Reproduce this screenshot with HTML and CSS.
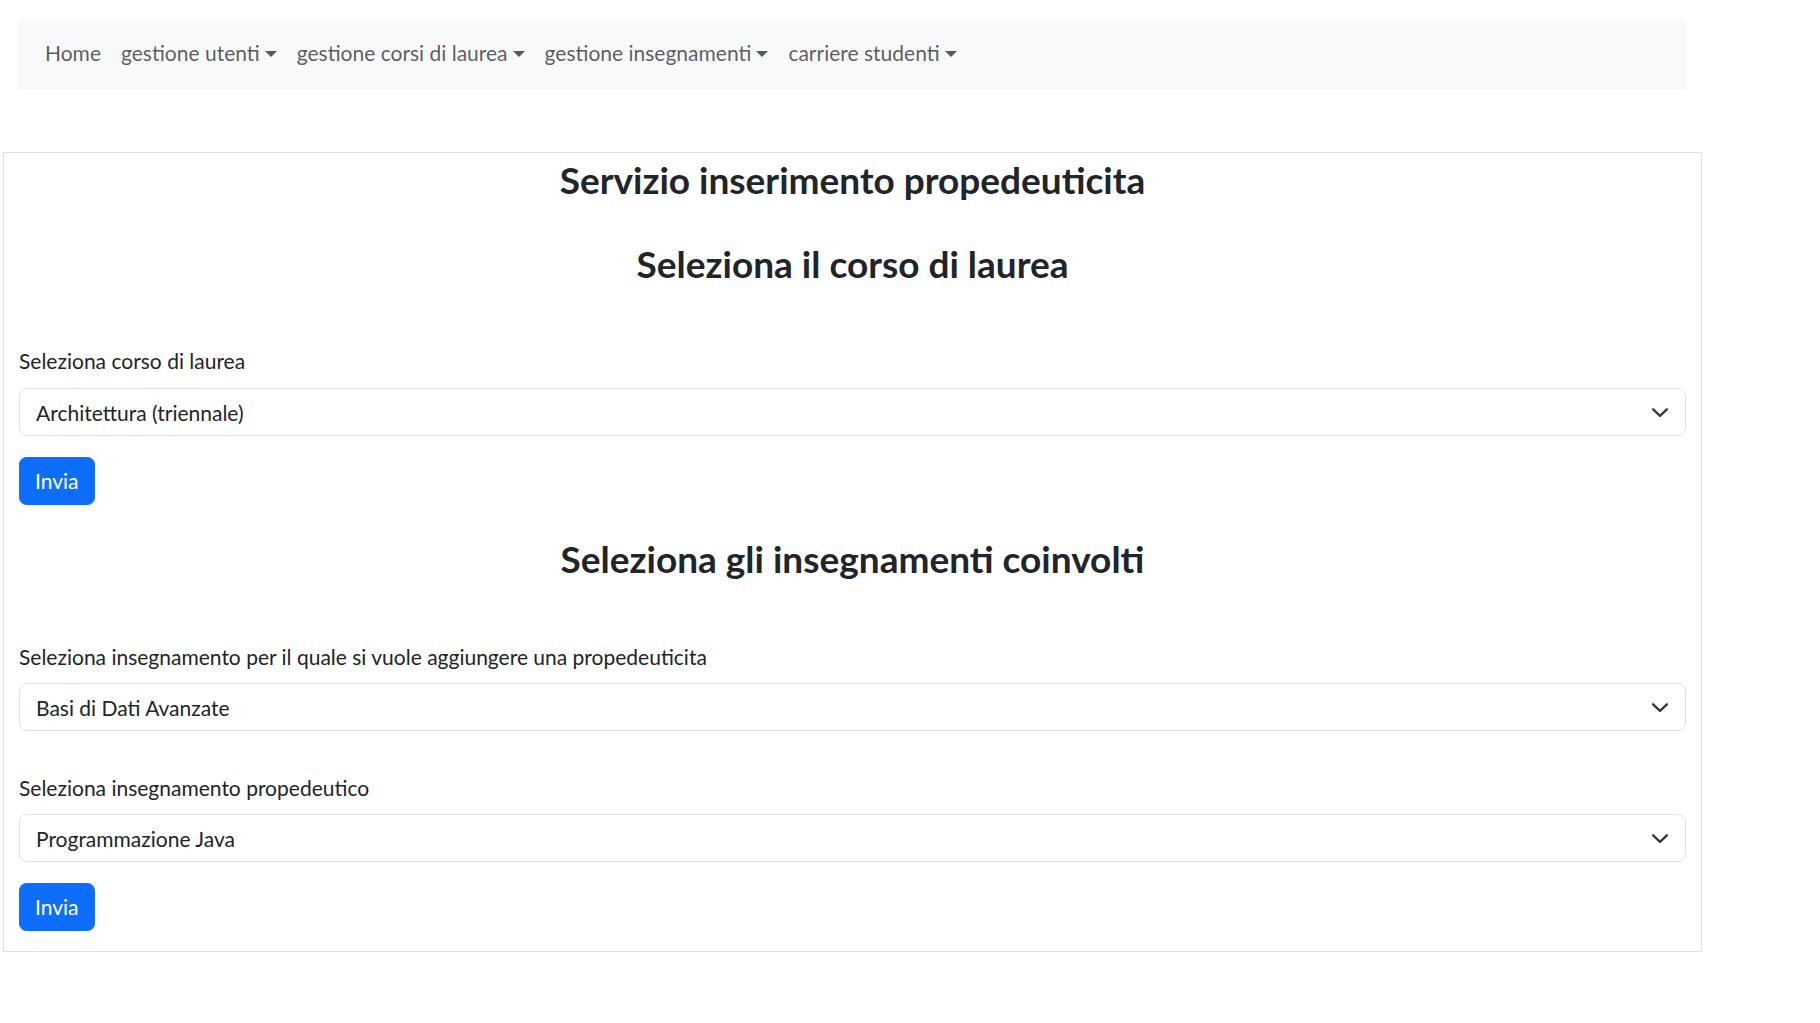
FILE: index.html
```html
<!DOCTYPE html>
<html lang="it">
<head>
<meta charset="utf-8">
<title>Servizio inserimento propedeuticita</title>
<link rel="stylesheet" href="styles.css">
</head>
<body>
<nav class="navbar">
  <a class="nav-link" href="#">Home</a>
  <a class="nav-link dropdown-toggle" href="#">gestione utenti</a>
  <a class="nav-link dropdown-toggle" href="#">gestione corsi di laurea</a>
  <a class="nav-link dropdown-toggle" href="#">gestione insegnamenti</a>
  <a class="nav-link dropdown-toggle" href="#">carriere studenti</a>
</nav>

<main class="card">
  <h2 class="title title-first">Servizio inserimento propedeuticita</h2>
  <h2 class="title title-second">Seleziona il corso di laurea</h2>

  <label class="form-label label-first">Seleziona corso di laurea</label>
  <div class="form-select">
    <span>Architettura (triennale)</span>
    <svg class="chevron" width="20" height="15" viewBox="0 0 16 12" aria-hidden="true"><path d="M2.5 3.5 8 8.7 13.5 3.5" fill="none" stroke="#343a40" stroke-width="1.9" stroke-linecap="round" stroke-linejoin="round"/></svg>
  </div>
  <button class="btn">Invia</button>

  <h2 class="title title-third">Seleziona gli insegnamenti coinvolti</h2>

  <label class="form-label label-second">Seleziona insegnamento per il quale si vuole aggiungere una propedeuticita</label>
  <div class="form-select">
    <span>Basi di Dati Avanzate</span>
    <svg class="chevron" width="20" height="15" viewBox="0 0 16 12" aria-hidden="true"><path d="M2.5 3.5 8 8.7 13.5 3.5" fill="none" stroke="#343a40" stroke-width="1.9" stroke-linecap="round" stroke-linejoin="round"/></svg>
  </div>

  <label class="form-label label-third">Seleziona insegnamento propedeutico</label>
  <div class="form-select">
    <span>Programmazione Java</span>
    <svg class="chevron" width="20" height="15" viewBox="0 0 16 12" aria-hidden="true"><path d="M2.5 3.5 8 8.7 13.5 3.5" fill="none" stroke="#343a40" stroke-width="1.9" stroke-linecap="round" stroke-linejoin="round"/></svg>
  </div>
  <button class="btn">Invia</button>
</main>
</body>
</html>
```

FILE: styles.css
```css
html, body {
  margin: 0;
  padding: 0;
  background: #ffffff;
}

body {
  font-family: Lato, "Open Sans", "Noto Sans", sans-serif;
  font-size: 21px;
  color: #212529;
}

.navbar {
  display: flex;
  align-items: center;
  box-sizing: border-box;
  width: 1668px;
  height: 72px;
  margin: 18px 0 0 18px;
  padding: 0 0 2px 17px;
  background: #f8f9fa;
}

.nav-link {
  display: flex;
  align-items: center;
  padding: 0 10px;
  line-height: 30px;
  font-size: 21px;
  color: rgba(0, 0, 0, 0.65);
  text-decoration: none;
}

.dropdown-toggle::after {
  content: "";
  display: inline-block;
  margin-left: 5px;
  border-top: 6px solid;
  border-left: 6px solid transparent;
  border-right: 6px solid transparent;
  border-bottom: 0;
  transform: translateY(1px);
}

.card {
  display: flex;
  flex-direction: column;
  align-items: stretch;
  box-sizing: border-box;
  width: 1699px;
  margin: 62px 0 0 3px;
  padding: 4px 15px 20px;
  border: 1px solid #dee2e6;
}

.title {
  margin: 0;
  font-size: 37px;
  line-height: 46px;
  font-weight: 700;
  text-align: center;
  color: #212529;
}

.title-second { margin-top: 38px; }
.title-third { margin-top: 31px; }

.form-label {
  display: block;
  line-height: 30px;
  font-size: 21px;
  margin-top: 59px;
  margin-bottom: 12px;
}

.label-second { margin-top: 60px; margin-bottom: 11px; }
.label-third { margin-top: 42px; margin-bottom: 11px; }

.form-select {
  display: flex;
  align-items: center;
  justify-content: space-between;
  box-sizing: border-box;
  height: 48px;
  padding: 0 15px 0 16px;
  border: 1px solid #dee2e6;
  border-radius: 7.5px;
  background: #fff;
  font-size: 21px;
  color: #212529;
}

.chevron {
  display: block;
  flex: none;
}

.btn {
  align-self: flex-start;
  box-sizing: border-box;
  height: 48px;
  margin-top: 21px;
  padding: 0 15px;
  border: 1px solid #0d6efd;
  border-radius: 7.5px;
  background: #0d6efd;
  color: #fff;
  font-family: inherit;
  font-size: 21px;
  line-height: 30px;
  cursor: pointer;
}
```
